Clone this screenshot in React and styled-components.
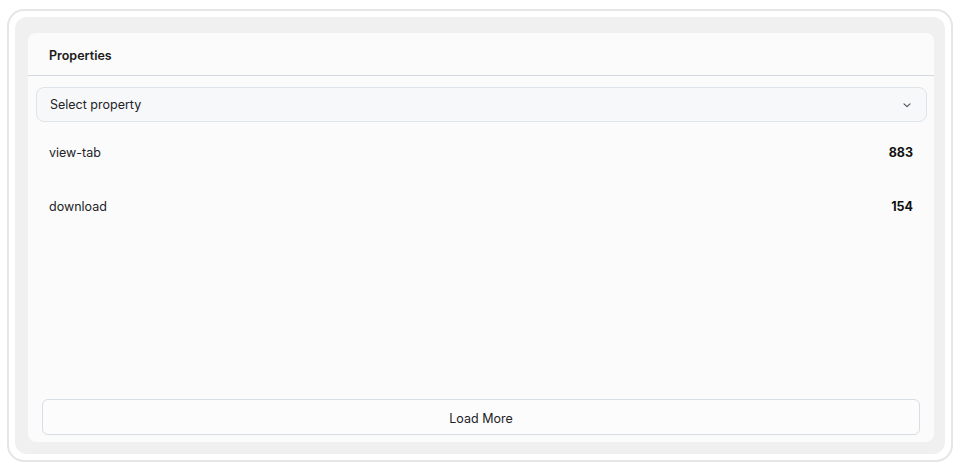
import styled, { createGlobalStyle } from "styled-components";

const rows = [
  { name: "view-tab", count: 883 },
  { name: "download", count: 154 },
];

const App = () => (
  <>
    <GlobalStyle />
    <Shell>
      <Frame>
        <Card>
          <Header>
            <Title>Properties</Title>
          </Header>
          <Select type="button">
            <span>Select property</span>
            <Chevron />
          </Select>
          <List>
            {rows.map((row) => (
              <Row key={row.name}>
                <Name>{row.name}</Name>
                <Count>{row.count}</Count>
              </Row>
            ))}
          </List>
          <LoadMore type="button">Load More</LoadMore>
        </Card>
      </Frame>
    </Shell>
  </>
);

/**
 * chevron icon
 */
const Chevron = () => (
  <svg width="10" height="10" viewBox="0 0 10 10" fill="none">
    <path
      d="M2 3.8 5 6.6 8 3.8"
      stroke="#4b4f55"
      strokeWidth="1.1"
      strokeLinecap="round"
      strokeLinejoin="round"
    />
  </svg>
);

/**
 * styles
 */
const GlobalStyle = createGlobalStyle`
  * {
    box-sizing: border-box;
  }

  body {
    margin: 0;
    background: #ffffff;
    font-family: Inter, "Liberation Sans", sans-serif;
    color: #1c1c1e;
  }
`;

const Shell = styled.div`
  width: 946px;
  height: 453px;
  margin: 9px 0 0 7px;
  padding: 6px;
  border: 2px solid #e6e6e6;
  border-radius: 17px;
  background: #ffffff;
  display: flex;
`;

const Frame = styled.div`
  flex: 1;
  display: flex;
  padding: 16px 11px 12px 13px;
  border-radius: 12px;
  background: #f0f0f0;
`;

const Card = styled.div`
  flex: 1;
  display: flex;
  flex-direction: column;
  border-radius: 8px;
  background: #fbfbfb;
`;

const Header = styled.div`
  height: 43px;
  display: flex;
  align-items: center;
  padding: 2px 21px 0;
  border-bottom: 1px solid #d4d9e0;
`;

const Title = styled.h2`
  margin: 0;
  font-size: 12.5px;
  font-weight: 600;
  color: #1a1a1a;
`;

const Select = styled.button`
  height: 35px;
  margin: 11px 7px 0 8px;
  padding: 0 14px 0 13px;
  display: flex;
  align-items: center;
  justify-content: space-between;
  border: 1px solid #dfe4ea;
  border-radius: 8px;
  background: #f7f8fa;
  font-family: inherit;
  font-size: 12.5px;
  color: #222326;
  text-align: left;
`;

const List = styled.div`
  flex: 1;
  display: flex;
  flex-direction: column;
  padding-top: 3px;
`;

const Row = styled.div`
  height: 54px;
  display: flex;
  align-items: center;
  justify-content: space-between;
  padding: 0 21px;
  font-size: 12.5px;
`;

const Name = styled.span`
  color: #222326;
`;

const Count = styled.span`
  font-weight: 700;
  color: #111111;
`;

const LoadMore = styled.button`
  height: 36px;
  margin: 0 14px 7px 14px;
  padding: 2px 0 0;
  border: 1px solid #d8dee6;
  border-radius: 6px;
  background: #fcfcfc;
  font-family: inherit;
  font-size: 12.5px;
  font-weight: 400;
  color: #222326;
`;

export default App;
